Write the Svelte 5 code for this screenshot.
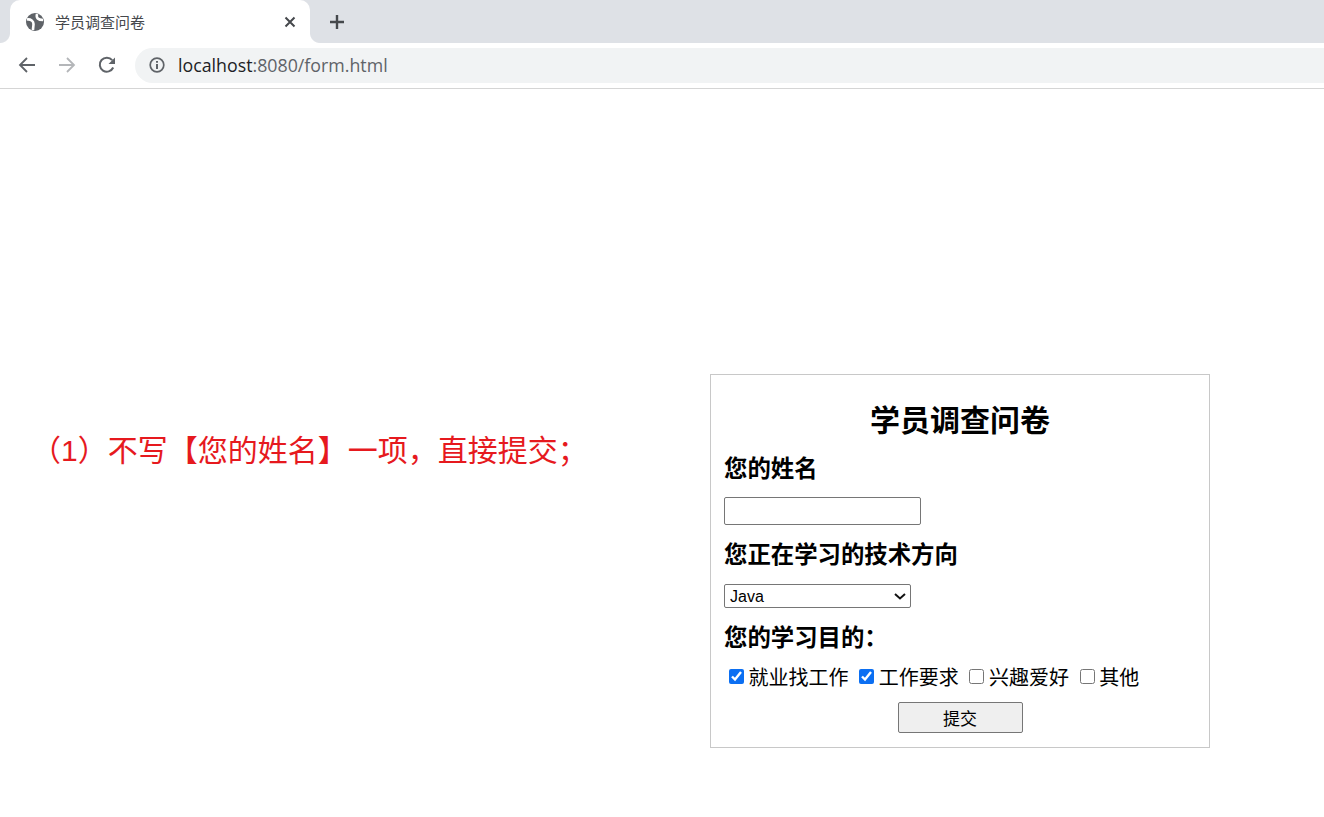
<script>
	let purposes = [
		{ label: "就业找工作", checked: true },
		{ label: "工作要求", checked: true },
		{ label: "兴趣爱好", checked: false },
		{ label: "其他", checked: false }
	]
</script>

<div class="browser">
	<div class="tabstrip">
		<div class="tab">
			<svg class="globe" width="18" height="18" viewBox="0 0 18 18">
				<circle cx="9" cy="9" r="9" fill="#5f6368" />
				<path d="M1 6.5 C5 6 7.5 8 7.5 11 C7.5 13 7 15 7 17" fill="none" stroke="#fff" stroke-width="2.6" />
				<path d="M11 1 C10 5 12 7 17 7" fill="none" stroke="#fff" stroke-width="2.6" />
			</svg>
			<span class="tabtitle">学员调查问卷</span>
			<svg class="close" width="12" height="12" viewBox="0 0 12 12">
				<path d="M1.5 1.5 L10.5 10.5 M10.5 1.5 L1.5 10.5" stroke="#45484c" stroke-width="2" />
			</svg>
		</div>
		<svg class="plus" width="16" height="16" viewBox="0 0 16 16">
			<path d="M8 1 V15 M1 8 H15" stroke="#45484c" stroke-width="2.4" />
		</svg>
	</div>
	<div class="toolbar">
		<svg class="navicon" width="18" height="18" viewBox="0 0 18 18">
			<path d="M17 9 H2.5 M9 2 L2 9 L9 16" fill="none" stroke="#5f6368" stroke-width="1.8" />
		</svg>
		<svg class="navicon" width="18" height="18" viewBox="0 0 18 18">
			<path d="M1 9 H15.5 M9 2 L16 9 L9 16" fill="none" stroke="#b4b6b9" stroke-width="1.8" />
		</svg>
		<svg class="navicon" width="18" height="18" viewBox="0 0 18 18">
			<path d="M15.2 11.5 A7 7 0 1 1 14.2 4.2" fill="none" stroke="#5f6368" stroke-width="2" />
			<path d="M17 1.5 V8 H10.5 Z" fill="#5f6368" />
		</svg>
		<div class="omnibox">
			<svg width="16" height="16" viewBox="0 0 16 16">
				<circle cx="8" cy="8" r="6.8" fill="none" stroke="#5f6368" stroke-width="1.7" />
				<path d="M8 7 V12 M8 4 V5.8" stroke="#5f6368" stroke-width="2" />
			</svg>
			<span class="url"><b>localhost</b>:8080/form.html</span>
		</div>
	</div>

	<main>
		<p class="note">（1）不写【您的姓名】一项，直接提交；</p>
		<form onsubmit={(e) => e.preventDefault()}>
			<h1>学员调查问卷</h1>
			<h3>您的姓名</h3>
			<input class="name" type="text" />
			<h3>您正在学习的技术方向</h3>
			<div class="selectwrap">
				<select>
					<option>Java</option>
					<option>Python</option>
				</select>
				<svg width="12" height="7" viewBox="0 0 12 7">
					<path d="M1 1 L6 5.5 L11 1" fill="none" stroke="#111" stroke-width="2" />
				</svg>
			</div>
			<h3>您的学习目的：</h3>
			<div class="purposes">
				{#each purposes as p}
					<label><input type="checkbox" bind:checked={p.checked} />{p.label}</label>
				{/each}
			</div>
			<div class="actions"><button type="submit">提交</button></div>
		</form>
	</main>
</div>

<style>
	:global(body) {
		background: #fff;
	}
	* {
		box-sizing: border-box;
		margin: 0;
	}
	.browser {
		height: 817px;
		overflow: hidden;
		font-family: "Liberation Sans", "Noto Sans CJK SC", sans-serif;
		color: #000;
	}
	.tabstrip {
		height: 43px;
		background: #dee1e6;
		display: flex;
		align-items: flex-end;
	}
	.tab {
		position: relative;
		width: 300px;
		height: 43px;
		margin-left: 10px;
		padding: 0 14px 0 16px;
		background: #fff;
		border-radius: 10px 10px 0 0;
		display: flex;
		align-items: center;
	}
	.tab::before,
	.tab::after {
		content: "";
		position: absolute;
		bottom: 0;
		width: 10px;
		height: 10px;
	}
	.tab::before {
		left: -10px;
		background: radial-gradient(circle at 0 0, #dee1e6 9.5px, #fff 10.5px);
	}
	.tab::after {
		right: -10px;
		background: radial-gradient(circle at 100% 0, #dee1e6 9.5px, #fff 10.5px);
	}
	.globe {
		flex: none;
	}
	.tabtitle {
		flex: 1;
		margin-left: 11px;
		font-size: 15px;
		color: #45484c;
	}
	.plus {
		margin: 0 0 13px 19px;
	}
	.toolbar {
		height: 46px;
		background: #fff;
		border-bottom: 1px solid #d5d5d5;
		display: flex;
		align-items: center;
		padding: 0 0 1px 18px;
	}
	.navicon {
		margin-right: 22px;
	}
	.omnibox {
		flex: 1;
		height: 35px;
		margin-left: -3px;
		padding-left: 14px;
		background: #f1f3f4;
		border-radius: 18px 0 0 18px;
		display: flex;
		align-items: center;
		gap: 13px;
	}
	.url {
		font-family: "Open Sans", "Liberation Sans", sans-serif;
		font-size: 17.8px;
		color: #5f6368;
	}
	.url b {
		font-weight: 400;
		color: #202124;
	}
	main {
		display: flex;
		align-items: flex-start;
		padding: 285px 0 0 31px;
	}
	.note {
		width: 679px;
		margin-top: 56px;
		font-size: 30px;
		line-height: 42px;
		color: #e6191e;
	}
	form {
		width: 500px;
		height: 374px;
		padding: 21px 13px 0;
		border: 1px solid #c8c8c8;
	}
	h1 {
		margin-bottom: 10px;
		font-size: 30px;
		line-height: 50px;
		text-align: center;
	}
	h3 {
		font-size: 23.4px;
		line-height: 27px;
	}
	.name {
		display: block;
		width: 197px;
		height: 28px;
		margin: 14px 0 17px;
		border: 1px solid #767676;
		border-radius: 2px;
		background: #fff;
	}
	.selectwrap {
		position: relative;
		width: 187px;
		height: 24px;
		margin: 15px 0 17px;
	}
	.selectwrap svg {
		position: absolute;
		right: 5px;
		top: 9px;
		pointer-events: none;
	}
	select {
		display: block;
		width: 100%;
		height: 100%;
		padding-left: 5px;
		appearance: none;
		border: 1px solid #767676;
		border-radius: 2px;
		background: #fff;
		font-family: "Liberation Sans", sans-serif;
		font-size: 16px;
		color: #000;
	}
	.purposes {
		display: flex;
		gap: 10.6px;
		margin-top: 12px;
		padding-left: 5px;
		font-size: 20px;
		line-height: 28px;
	}
	label {
		display: flex;
		align-items: center;
	}
	label input {
		width: 15px;
		height: 15px;
		margin: 0 4.6px 3px 0;
		accent-color: #0b6ff2;
	}
	.actions {
		display: flex;
		justify-content: center;
		margin-top: 10px;
	}
	button {
		width: 125px;
		height: 31px;
		padding: 0;
		border: 1px solid #767676;
		border-radius: 2px;
		background: #efefef;
		font-family: "Liberation Sans", "Noto Sans CJK SC", sans-serif;
		font-size: 17px;
		color: #000;
	}
</style>
